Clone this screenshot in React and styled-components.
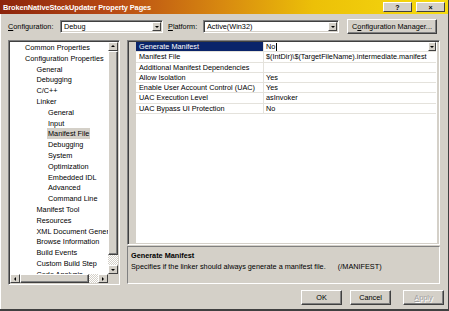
import styled, { createGlobalStyle } from "styled-components";

const Global = createGlobalStyle`
  html, body { margin: 0; padding: 0; background: #d4d0c8; }
  body { font-family: "Liberation Sans", Arial, sans-serif; font-size: 7.3px; color: #000; }
  * { box-sizing: border-box; }
`

const Window = styled.div`
  width: 449px;
  height: 311px;
  background: #d4d0c8;
  display: flex;
  flex-direction: column;
  border-right: 1px solid #404040;
  border-bottom: 2px solid #404040;
  box-shadow: inset 1px 1px #fff;
  overflow: hidden;
`
const TitleBar = styled.div`
  height: 14px;
  flex: none;
  display: flex;
  align-items: center;
  padding: 0 3px 0 3px;
  background: linear-gradient(to right, #8c240c 0%, #b84a14 25%, #d88a10 50%, #ecc008 70%, #f6dc10 100%);
`
const Title = styled.span`
  flex: 1;
  color: #fff;
  font-weight: bold;
  font-size: 7.4px;
  letter-spacing: -0.1px;
`
const CaptionButton = styled.div`
  width: 29px;
  height: 10px;
  margin-left: ${p => p.$gap || 0}px;
  background: #d4d0c8;
  border: 1px solid;
  border-color: #fff #404040 #404040 #fff;
  display: flex;
  align-items: center;
  justify-content: center;
  font-size: 7px;
  font-weight: bold;
  line-height: 1;
`
const ConfigRow = styled.div`
  display: flex;
  align-items: center;
  height: 16px;
  margin-top: 4px;
  padding-left: 8px;
`
const Label = styled.span`
  width: ${p => p.$w}px;
  padding-left: ${p => p.$pl || 0}px;
  flex: none;
  u { text-decoration: underline; }
`
const Combo = styled.div`
  width: ${p => p.$w}px;
  height: 13px;
  flex: none;
  background: #fff;
  border: 1px solid;
  border-color: #808080 #fff #fff #808080;
  box-shadow: inset 1px 1px #404040, inset -1px -1px #d4d0c8;
  display: flex;
  align-items: center;
  padding: 0 1px 0 3px;
`
const ComboText = styled.span`
  flex: 1;
  white-space: nowrap;
  overflow: hidden;
`
const ArrowButton = styled.div`
  width: ${p => p.$w || 9}px;
  height: ${p => p.$h || 9}px;
  flex: none;
  background: #d4d0c8;
  border: 1px solid;
  border-color: #fff #404040 #404040 #fff;
  display: flex;
  align-items: center;
  justify-content: center;
`
const Tri = styled.span`
  width: 0;
  height: 0;
  border: 2px solid transparent;
  ${p => p.$dir === "down" && "border-top: 2.5px solid #000; border-bottom: 0; margin-top: 1px;"}
  ${p => p.$dir === "up" && "border-bottom: 2.5px solid #000; border-top: 0; margin-bottom: 1px;"}
  ${p => p.$dir === "left" && "border-right: 2.5px solid #000; border-left: 0;"}
  ${p => p.$dir === "right" && "border-left: 2.5px solid #000; border-right: 0;"}
`
const Button = styled.div`
  width: ${p => p.$w}px;
  height: ${p => p.$h || 15}px;
  flex: none;
  margin-left: ${p => p.$ml || 0}px;
  background: #d4d0c8;
  border: 1px solid;
  border-color: #fff #404040 #404040 #fff;
  box-shadow: inset -1px -1px #808080;
  display: flex;
  align-items: center;
  justify-content: center;
  color: ${p => (p.$disabled ? "#a0a0a0" : "#000")};
  text-shadow: ${p => (p.$disabled ? "1px 1px #fff" : "none")};
  white-space: nowrap;
`
const Main = styled.div`
  display: flex;
  margin-top: 6px;
  padding: 0 8px;
  height: 245px;
  gap: 7px;
`
const TreeBox = styled.div`
  width: 112px;
  flex: none;
  background: #fff;
  border: 1px solid;
  border-color: #808080 #fff #fff #808080;
  box-shadow: inset 1px 1px #404040, inset -1px -1px #d4d0c8;
  padding: 1px;
  display: grid;
  grid-template-columns: minmax(0, 1fr) 10px;
  grid-template-rows: minmax(0, 1fr) 9px;
`
const TreeList = styled.div`
  overflow: hidden;
  padding-top: 1px;
`
const TreeItem = styled.div`
  height: 10.8px;
  line-height: 10.8px;
  padding-left: ${p => 14 + p.$level * 11.5}px;
  white-space: nowrap;
`
const ItemText = styled.span`
  padding: 1px 1px;
  background: ${p => (p.$sel ? "#d4d0c8" : "transparent")};
`
const VScroll = styled.div`
  display: flex;
  flex-direction: column;
  background: repeating-conic-gradient(#d4d0c8 0 25%, #fff 0 50%) 0 0 / 2px 2px;
`
const Thumb = styled.div`
  flex: ${p => p.$flex};
  background: #d4d0c8;
  border: 1px solid;
  border-color: #fff #404040 #404040 #fff;
  box-shadow: inset -1px -1px #808080;
`
const Track = styled.div`
  flex: ${p => p.$flex};
`
const HScroll = styled.div`
  display: flex;
  background: repeating-conic-gradient(#d4d0c8 0 25%, #fff 0 50%) 0 0 / 2px 2px;
`
const Corner = styled.div`
  background: #d4d0c8;
`
const RightCol = styled.div`
  flex: 1;
  display: flex;
  flex-direction: column;
  gap: 1px;
`
const Grid = styled.div`
  height: 205px;
  background: #fff;
  border: 1px solid;
  border-color: #808080 #fff #fff #808080;
  box-shadow: inset 1px 1px #404040, inset -2px -1px #d4d0c8;
  display: flex;
  padding: 1px 3px 1px 1px;
`
const Gutter = styled.div`
  width: 7px;
  flex: none;
  background: #d4d0c8;
`
const Rows = styled.div`
  flex: 1;
  display: flex;
  flex-direction: column;
`
const Row = styled.div`
  display: grid;
  grid-template-columns: 128px 1fr;
  height: 10.3px;
  border-bottom: 1px solid #e4e2dc;
`
const NameCell = styled.div`
  padding-left: 3px;
  line-height: 9.3px;
  white-space: nowrap;
  overflow: hidden;
  background: ${p => (p.$sel ? "#0a246a" : "transparent")};
  color: ${p => (p.$sel ? "#fff" : "#000")};
  border-right: 1px solid #e4e2dc;
`
const ValueCell = styled.div`
  padding-left: 2px;
  line-height: 9.3px;
  white-space: nowrap;
  overflow: hidden;
  display: flex;
  align-items: center;
`
const Caret = styled.span`
  width: 1px;
  height: 8px;
  background: #000;
  margin-left: 0.5px;
`
const Spacer = styled.span`
  flex: 1;
`
const Description = styled.div`
  height: 38px;
  border: 1px solid;
  border-color: #808080 #fff #fff #808080;
  padding: 4px 3px;
  line-height: 10.5px;
`
const DescTitle = styled.div`
  font-weight: bold;
`
const ButtonRow = styled.div`
  display: flex;
  justify-content: flex-end;
  margin-top: 5px;
  padding-right: 4px;
`

const tree = [
  ["Common Properties", 0],
  ["Configuration Properties", 0],
  ["General", 1],
  ["Debugging", 1],
  ["C/C++", 1],
  ["Linker", 1],
  ["General", 2],
  ["Input", 2],
  ["Manifest File", 2, true],
  ["Debugging", 2],
  ["System", 2],
  ["Optimization", 2],
  ["Embedded IDL", 2],
  ["Advanced", 2],
  ["Command Line", 2],
  ["Manifest Tool", 1],
  ["Resources", 1],
  ["XML Document Generator", 1],
  ["Browse Information", 1],
  ["Build Events", 1],
  ["Custom Build Step", 1],
  ["Code Analysis", 1],
]

const props = [
  ["Generate Manifest", "No"],
  ["Manifest File", "$(IntDir)\\$(TargetFileName).intermediate.manifest"],
  ["Additional Manifest Dependencies", ""],
  ["Allow Isolation", "Yes"],
  ["Enable User Account Control (UAC)", "Yes"],
  ["UAC Execution Level", "asInvoker"],
  ["UAC Bypass UI Protection", "No"],
]

export default function App() {
  return (
    <Window>
      <Global />
      <TitleBar>
        <Title>BrokenNativeStockUpdater Property Pages</Title>
        <CaptionButton>?</CaptionButton>
        <CaptionButton $gap={4}>×</CaptionButton>
      </TitleBar>

      <ConfigRow>
        <Label $w={52}><u>C</u>onfiguration:</Label>
        <Combo $w={103}>
          <ComboText>Debug</ComboText>
          <ArrowButton><Tri $dir="down" /></ArrowButton>
        </Combo>
        <Label $w={40} $pl={5}><u>P</u>latform:</Label>
        <Combo $w={136}>
          <ComboText>Active(Win32)</ComboText>
          <ArrowButton><Tri $dir="down" /></ArrowButton>
        </Combo>
        <Button $w={90} $ml={8}>C<u>o</u>nfiguration Manager...</Button>
      </ConfigRow>

      <Main>
        <TreeBox>
          <TreeList>
            {tree.map(([name, level, sel], i) => (
              <TreeItem key={i} $level={level}>
                <ItemText $sel={sel}>{name}</ItemText>
              </TreeItem>
            ))}
          </TreeList>
          <VScroll>
            <ArrowButton $w={10} $h={9}><Tri $dir="up" /></ArrowButton>
            <Thumb $flex={20} />
            <Track $flex={1} />
            <ArrowButton $w={10} $h={9}><Tri $dir="down" /></ArrowButton>
          </VScroll>
          <HScroll>
            <ArrowButton $w={10} $h={9}><Tri $dir="left" /></ArrowButton>
            <Thumb $flex={7} />
            <Track $flex={1} />
            <ArrowButton $w={10} $h={9}><Tri $dir="right" /></ArrowButton>
          </HScroll>
          <Corner />
        </TreeBox>

        <RightCol>
          <Grid>
            <Gutter />
            <Rows>
              {props.map(([name, value], i) => (
                <Row key={i}>
                  <NameCell $sel={i === 0}>{name}</NameCell>
                  <ValueCell>
                    {value}
                    {i === 0 && (
                      <>
                        <Caret />
                        <Spacer />
                        <ArrowButton $w={8} $h={9}><Tri $dir="down" /></ArrowButton>
                      </>
                    )}
                  </ValueCell>
                </Row>
              ))}
            </Rows>
          </Grid>
          <Description>
            <DescTitle>Generate Manifest</DescTitle>
            <div>Specifies if the linker should always generate a manifest file.&nbsp;&nbsp;&nbsp;&nbsp;&nbsp;&nbsp;(/MANIFEST)</div>
          </Description>
        </RightCol>
      </Main>

      <ButtonRow>
        <Button $w={41}>OK</Button>
        <Button $w={41} $ml={8}>Cancel</Button>
        <Button $w={41} $ml={12} $disabled><u>A</u>pply</Button>
      </ButtonRow>
    </Window>
  )
}
